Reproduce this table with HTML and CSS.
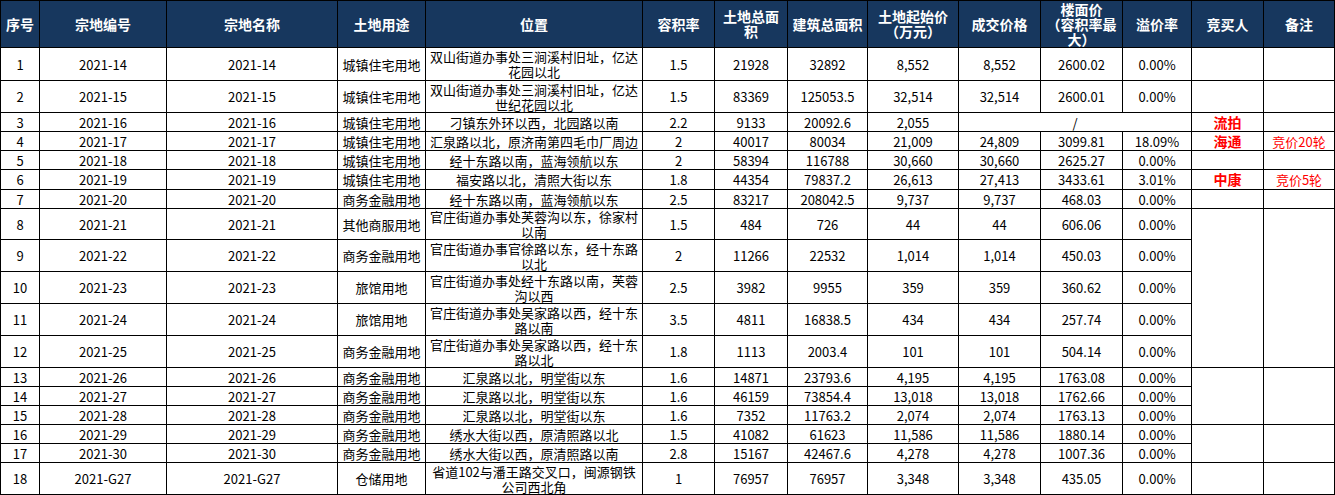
FILE: index.html
```html
<!DOCTYPE html>
<html lang="zh-CN">
<head>
<meta charset="utf-8">
<title>土地成交表</title>
<link rel="stylesheet" href="styles.css">
</head>
<body>
<table class="land">
  <colgroup>
    <col class="c-no"><col class="c-code"><col class="c-name"><col class="c-use"><col class="c-loc">
    <col class="c-far"><col class="c-area"><col class="c-build"><col class="c-start"><col class="c-deal">
    <col class="c-floor"><col class="c-prem"><col class="c-buyer"><col class="c-note">
  </colgroup>
  <thead>
    <tr class="hd">
      <th>序号</th><th>宗地编号</th><th>宗地名称</th><th>土地用途</th><th>位置</th>
      <th>容积率</th><th>土地总面<br>积</th><th>建筑总面积</th><th>土地起始价<br>（万元）</th><th>成交价格</th>
      <th>楼面价<br>（容积率最<br>大）</th><th>溢价率</th><th>竞买人</th><th>备注</th>
    </tr>
  </thead>
  <tbody>
    <tr class="r2 r2a">
      <td>1</td><td>2021-14</td><td>2021-14</td><td>城镇住宅用地</td><td class="loc">双山街道办事处三涧溪村旧址，亿达花园以北</td>
      <td>1.5</td><td>21928</td><td>32892</td><td>8,552</td><td>8,552</td><td>2600.02</td><td>0.00%</td><td></td><td></td>
    </tr>
    <tr class="r2">
      <td>2</td><td>2021-15</td><td>2021-15</td><td>城镇住宅用地</td><td class="loc">双山街道办事处三涧溪村旧址，亿达世纪花园以北</td>
      <td>1.5</td><td>83369</td><td>125053.5</td><td>32,514</td><td>32,514</td><td>2600.01</td><td>0.00%</td><td></td><td></td>
    </tr>
    <tr class="r1">
      <td>3</td><td>2021-16</td><td>2021-16</td><td>城镇住宅用地</td><td class="loc">刁镇东外环以西，北园路以南</td>
      <td>2.2</td><td>9133</td><td>20092.6</td><td>2,055</td><td colspan="3">/</td><td class="buyer">流拍</td><td></td>
    </tr>
    <tr class="r1">
      <td>4</td><td>2021-17</td><td>2021-17</td><td>城镇住宅用地</td><td class="loc">汇泉路以北，原济南第四毛巾厂周边</td>
      <td>2</td><td>40017</td><td>80034</td><td>21,009</td><td>24,809</td><td>3099.81</td><td>18.09%</td><td class="buyer">海通</td><td class="note">竞价20轮</td>
    </tr>
    <tr class="r1">
      <td>5</td><td>2021-18</td><td>2021-18</td><td>城镇住宅用地</td><td class="loc">经十东路以南，蓝海领航以东</td>
      <td>2</td><td>58394</td><td>116788</td><td>30,660</td><td>30,660</td><td>2625.27</td><td>0.00%</td><td></td><td></td>
    </tr>
    <tr class="r1 r1b">
      <td>6</td><td>2021-19</td><td>2021-19</td><td>城镇住宅用地</td><td class="loc">福安路以北，清照大街以东</td>
      <td>1.8</td><td>44354</td><td>79837.2</td><td>26,613</td><td>27,413</td><td>3433.61</td><td>3.01%</td><td class="buyer">中康</td><td class="note">竞价5轮</td>
    </tr>
    <tr class="r1">
      <td>7</td><td>2021-20</td><td>2021-20</td><td>商务金融用地</td><td class="loc">经十东路以南，蓝海领航以东</td>
      <td>2.5</td><td>83217</td><td>208042.5</td><td>9,737</td><td>9,737</td><td>468.03</td><td>0.00%</td><td></td><td></td>
    </tr>
    <tr class="r2 r2b">
      <td>8</td><td>2021-21</td><td>2021-21</td><td>其他商服用地</td><td class="loc">官庄街道办事处芙蓉沟以东，徐家村以南</td>
      <td>1.5</td><td>484</td><td>726</td><td>44</td><td>44</td><td>606.06</td><td>0.00%</td><td rowspan="5"></td><td rowspan="5"></td>
    </tr>
    <tr class="r2">
      <td>9</td><td>2021-22</td><td>2021-22</td><td>商务金融用地</td><td class="loc">官庄街道办事官徐路以东，经十东路以北</td>
      <td>2</td><td>11266</td><td>22532</td><td>1,014</td><td>1,014</td><td>450.03</td><td>0.00%</td>
    </tr>
    <tr class="r2">
      <td>10</td><td>2021-23</td><td>2021-23</td><td>旅馆用地</td><td class="loc">官庄街道办事处经十东路以南，芙蓉沟以西</td>
      <td>2.5</td><td>3982</td><td>9955</td><td>359</td><td>359</td><td>360.62</td><td>0.00%</td>
    </tr>
    <tr class="r2">
      <td>11</td><td>2021-24</td><td>2021-24</td><td>旅馆用地</td><td class="loc">官庄街道办事处吴家路以西，经十东路以南</td>
      <td>3.5</td><td>4811</td><td>16838.5</td><td>434</td><td>434</td><td>257.74</td><td>0.00%</td>
    </tr>
    <tr class="r2">
      <td>12</td><td>2021-25</td><td>2021-25</td><td>商务金融用地</td><td class="loc">官庄街道办事处吴家路以西，经十东路以北</td>
      <td>1.8</td><td>1113</td><td>2003.4</td><td>101</td><td>101</td><td>504.14</td><td>0.00%</td>
    </tr>
    <tr class="r1">
      <td>13</td><td>2021-26</td><td>2021-26</td><td>商务金融用地</td><td class="loc">汇泉路以北，明堂街以东</td>
      <td>1.6</td><td>14871</td><td>23793.6</td><td>4,195</td><td>4,195</td><td>1763.08</td><td>0.00%</td><td rowspan="3"></td><td rowspan="3"></td>
    </tr>
    <tr class="r1">
      <td>14</td><td>2021-27</td><td>2021-27</td><td>商务金融用地</td><td class="loc">汇泉路以北，明堂街以东</td>
      <td>1.6</td><td>46159</td><td>73854.4</td><td>13,018</td><td>13,018</td><td>1762.66</td><td>0.00%</td>
    </tr>
    <tr class="r1">
      <td>15</td><td>2021-28</td><td>2021-28</td><td>商务金融用地</td><td class="loc">汇泉路以北，明堂街以东</td>
      <td>1.6</td><td>7352</td><td>11763.2</td><td>2,074</td><td>2,074</td><td>1763.13</td><td>0.00%</td>
    </tr>
    <tr class="r1">
      <td>16</td><td>2021-29</td><td>2021-29</td><td>商务金融用地</td><td class="loc">绣水大街以西，原清照路以北</td>
      <td>1.5</td><td>41082</td><td>61623</td><td>11,586</td><td>11,586</td><td>1880.14</td><td>0.00%</td><td rowspan="2"></td><td rowspan="2"></td>
    </tr>
    <tr class="r1">
      <td>17</td><td>2021-30</td><td>2021-30</td><td>商务金融用地</td><td class="loc">绣水大街以西，原清照路以南</td>
      <td>2.8</td><td>15167</td><td>42467.6</td><td>4,278</td><td>4,278</td><td>1007.36</td><td>0.00%</td>
    </tr>
    <tr class="r2">
      <td>18</td><td>2021-G27</td><td>2021-G27</td><td>仓储用地</td><td class="loc">省道102与潘王路交叉口，闽源钢铁公司西北角</td>
      <td>1</td><td>76957</td><td>76957</td><td>3,348</td><td>3,348</td><td>435.05</td><td>0.00%</td><td></td><td></td>
    </tr>
  </tbody>
</table>
</body>
</html>
```
FILE: styles.css
```css
html, body {
  margin: 0;
  padding: 0;
  background: #ffffff;
}

.land {
  border-collapse: collapse;
  table-layout: fixed;
  width: 1335px;
  font-family: "Noto Sans CJK SC", "Noto Sans", sans-serif;
  font-size: 13px;
  line-height: 15px;
  color: #000000;
}

.c-no { width: 39px; }
.c-code { width: 127px; }
.c-name { width: 171px; }
.c-use { width: 88px; }
.c-loc { width: 217px; }
.c-far { width: 72px; }
.c-area { width: 73px; }
.c-build { width: 80px; }
.c-start { width: 91px; }
.c-deal { width: 82px; }
.c-floor { width: 82px; }
.c-prem { width: 69px; }
.c-buyer { width: 72px; }
.c-note { width: 71px; }

.land th,
.land td {
  border: 1px solid #000000;
  padding: 0 3px;
  text-align: center;
  vertical-align: middle;
  white-space: normal;
  overflow: hidden;
}

.land th {
  background: #17375e;
  color: #ffffff;
  font-weight: 700;
  font-size: 14px;
  line-height: 15px;
  padding: 0 2px;
}

.hd { height: 47px; }
.r1 { height: 19px; }
.r1b { height: 20px; }
.r2 { height: 32px; }
.r2a { height: 33px; }
.r2b { height: 31px; }

.land td.loc {
  padding: 0 4px;
}

.land td.buyer {
  color: #ff0000;
  font-weight: 700;
  font-size: 14px;
}

.land td.note {
  color: #ff0000;
}
```
